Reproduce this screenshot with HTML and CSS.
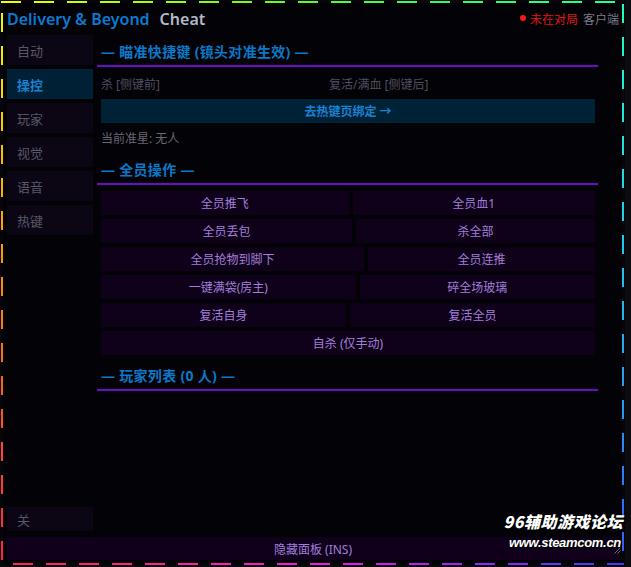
FILE: index.html
```html
<!DOCTYPE html>
<html lang="zh-CN">
<head>
<meta charset="utf-8">
<title>Delivery &amp; Beyond Cheat</title>
<link rel="stylesheet" href="styles.css">
</head>
<body>
<div class="frame">
  <div class="edge edge-top"></div>
  <div class="edge edge-left"></div>
  <div class="panel">
    <header class="titlebar">
      <div class="title"><span class="brand">Delivery &amp; Beyond</span><span class="sub">Cheat</span></div>
      <div class="status"><span class="dot"></span><span class="offline">未在对局</span><span class="client">客户端</span></div>
    </header>
    <div class="workspace">
      <nav class="sidebar">
        <div class="nav-item">自动</div>
        <div class="nav-item active">操控</div>
        <div class="nav-item">玩家</div>
        <div class="nav-item">视觉</div>
        <div class="nav-item">语音</div>
        <div class="nav-item">热键</div>
        <div class="nav-item off">关</div>
      </nav>
      <main class="content">
        <h2 class="section">— 瞄准快捷键 (镜头对准生效) —</h2>
        <div class="keys"><span>杀 [侧键前]</span><span>复活/满血 [侧键后]</span></div>
        <button class="link-btn">去热键页绑定 →</button>
        <div class="target">当前准星: 无人</div>
        <h2 class="section">— 全员操作 —</h2>
        <div class="actions">
          <div class="row"><button class="act">全员推飞</button><button class="act">全员血1</button></div>
          <div class="row"><button class="act">全员丢包</button><button class="act">杀全部</button></div>
          <div class="row"><button class="act">全员抢物到脚下</button><button class="act">全员连推</button></div>
          <div class="row"><button class="act">一键满袋(房主)</button><button class="act">碎全场玻璃</button></div>
          <div class="row"><button class="act">复活自身</button><button class="act">复活全员</button></div>
          <div class="row"><button class="act">自杀 (仅手动)</button></div>
        </div>
        <h2 class="section">— 玩家列表 (0 人) —</h2>
      </main>
    </div>
    <button class="footer-btn">隐藏面板 (INS)</button>
  </div>
  <div class="edge edge-right"></div>
  <div class="edge edge-bottom"></div>
  <svg class="grip" width="7" height="7" viewBox="0 0 7 7"><path d="M6.5 0.5 L0.5 6.5 M6.5 3.5 L3.5 6.5" stroke="#6c6c74" stroke-width="1"/></svg>
  <div class="watermark">
    <div class="wm-name">96辅助游戏论坛</div>
    <div class="wm-url">www.steamcom.cn</div>
  </div>
</div>
</body>
</html>
```

FILE: styles.css
```css
* { box-sizing: border-box; margin: 0; padding: 0; }
html, body { background: #0c0b10; }
body {
  width: 631px;
  height: 567px;
  overflow: hidden;
  font-family: "Noto Sans", "Noto Sans CJK SC", sans-serif;
}

.frame {
  position: relative;
  width: 625px;
  height: 566px;
  padding: 1px;
  background: #060509;
  display: grid;
  grid-template-columns: 2px 1fr 2px;
  grid-template-rows: 2px 1fr 2px;
  grid-template-areas:
    "top top top"
    "left panel right"
    "bottom bottom bottom";
}

.edge-top {
  grid-area: top;
  background:
    linear-gradient(90deg, transparent 0 20px, #060509 20px 33px) 0 0 / 33px 100% repeat-x,
    linear-gradient(90deg, #f2ff00 0%, #b8ff00 18%, #60ff20 45%, #30ff60 70%, #20ffa8 100%);
}
.edge-right {
  grid-area: right;
  background:
    linear-gradient(180deg, transparent 0 19px, #060509 19px 33px) 0 1px / 100% 33px repeat-y,
    linear-gradient(180deg, #20ffb8 0%, #20e8d8 20%, #20c8e8 45%, #2898f0 72%, #3858ff 100%);
}
.edge-bottom {
  grid-area: bottom;
  background:
    linear-gradient(90deg, transparent 0 20px, #060509 20px 33px) 12px 0 / 33px 100% repeat-x,
    linear-gradient(90deg, #ff2058 0%, #ff2090 22%, #f818e0 48%, #a020f8 75%, #3c3cff 100%);
}
.edge-left {
  grid-area: left;
  background:
    linear-gradient(180deg, transparent 0 19px, #060509 19px 33px) 0 10px / 100% 33px repeat-y,
    linear-gradient(180deg, #eaff00 0%, #ffc800 22%, #ff9800 45%, #ff5820 72%, #ff2048 100%);
}

.panel {
  grid-area: panel;
  background: #030206;
  display: flex;
  flex-direction: column;
  padding: 0 3px 3px 4px;
  min-height: 0;
}

.titlebar {
  height: 32px;
  flex: none;
  display: flex;
  align-items: center;
  justify-content: space-between;
}
.title { display: flex; align-items: baseline; font-weight: 600; font-size: 16px; }
.brand { color: #0c7ad0; }
.sub { color: #b2b9c6; margin-left: 10px; }
.status { display: flex; align-items: center; font-family: "Noto Sans CJK SC", sans-serif; font-size: 12px; margin-top: -2px; }
.dot { width: 6px; height: 6px; border-radius: 50%; background: #ff1414; margin-right: 4px; }
.offline { color: #e01616; }
.client { color: #7c7c8a; margin-left: 5px; }

.workspace {
  flex: 1;
  min-height: 0;
  display: flex;
  gap: 4px;
  margin-bottom: 6px;
}

.sidebar {
  width: 86px;
  flex: none;
  display: flex;
  flex-direction: column;
  gap: 4px;
}
.nav-item {
  height: 30px;
  display: flex;
  align-items: center;
  padding-left: 10px;
  background: #0c0514;
  color: #575767;
  font-family: "Noto Sans CJK SC", sans-serif;
  font-size: 13px;
}
.nav-item.active { background: #002135; color: #1a80d0; font-weight: 700; }
.nav-item.off { margin-top: auto; height: 24px; }

.content {
  width: 501px;
  flex: none;
  display: flex;
  flex-direction: column;
  font-size: 12px;
}
.section {
  font-size: 14px;
  line-height: 18px;
  font-weight: 700;
  letter-spacing: 0.3px;
  color: #0b78c8;
  padding: 8px 4px 4px;
  border-bottom: 2px solid #6a0cc8;
}
.target + .section, .actions + .section { margin-top: 4px; }

.keys {
  display: grid;
  grid-template-columns: 228px 1fr;
  margin: 8px 3px 0 4px;
  line-height: 20px;
  color: #4f4f60;
}
.link-btn {
  margin: 4px 3px 0 4px;
  height: 24px;
  border: 0;
  background: #002236;
  color: #1a80d0;
  font: inherit;
  font-weight: 700;
}
.target {
  margin: 6px 3px 0 4px;
  line-height: 20px;
  color: #676775;
}

.actions {
  margin: 6px 3px 0 4px;
  display: flex;
  flex-direction: column;
  gap: 4px;
}
.row { display: flex; gap: 4px; }
.act {
  flex: 1 1 auto;
  height: 24px;
  border: 0;
  padding: 0;
  background: #10011b;
  color: #a07fd8;
  font: inherit;
}

.footer-btn {
  flex: none;
  height: 23px;
  width: 100%;
  border: 0;
  background: #10001b;
  color: #a07fd8;
  font: inherit;
  font-size: 12px;
}

.grip { position: absolute; right: 4px; bottom: 12px; }

.watermark {
  position: absolute;
  right: 2px;
  top: 509px;
  text-align: right;
  color: #ffffff;
  font-style: italic;
  font-weight: 900;
  text-shadow: 1px 1px 1px #000, 0 0 2px #000;
  font-family: "Noto Sans CJK SC", sans-serif;
}
.wm-name { font-size: 16px; line-height: 24px; letter-spacing: 0.5px; }
.wm-url { font-family: "Liberation Sans", sans-serif; font-size: 13px; line-height: 20px; letter-spacing: -0.3px; margin-right: 2px; }
```
